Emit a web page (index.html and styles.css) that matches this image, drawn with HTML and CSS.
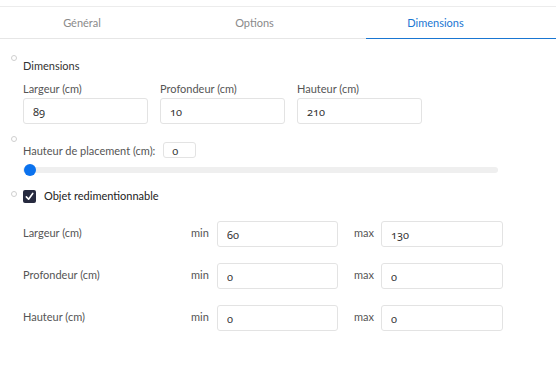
FILE: index.html
```html
<!DOCTYPE html>
<html lang="fr">
<head>
    <meta charset="UTF-8">
    <meta name="viewport" content="width=device-width, initial-scale=1.0">
    <title>Dimensions</title>
    <link rel="stylesheet" href="styles.css">
</head>
<body>

    <div class="top-strip"></div>

    <!-- Tabs -->
    <div class="tabs">
        <div class="tab">Général</div>
        <div class="tab">Options</div>
        <div class="tab active">Dimensions</div>
    </div>

    <div class="panel">

        <!-- Dimensions -->
        <div class="section">
            <span class="marker"></span>
            <div class="section-body">
                <div class="section-title">Dimensions</div>
                <div class="dims">
                    <div class="field">
                        <label>Largeur (cm)</label>
                        <input class="text-input" type="text" value="89">
                    </div>
                    <div class="field">
                        <label>Profondeur (cm)</label>
                        <input class="text-input" type="text" value="10">
                    </div>
                    <div class="field">
                        <label>Hauteur (cm)</label>
                        <input class="text-input" type="text" value="210">
                    </div>
                </div>
            </div>
        </div>

        <!-- Placement -->
        <div class="section section-placement">
            <span class="marker"></span>
            <div class="section-body">
                <div class="inline-row">
                    <label>Hauteur de placement (cm):</label>
                    <input class="small-input" type="text" value="0">
                </div>
                <div class="slider">
                    <div class="slider-thumb"></div>
                </div>
            </div>
        </div>

        <!-- Resizable -->
        <div class="section section-resize">
            <span class="marker"></span>
            <div class="section-body">
                <label class="check-row">
                    <span class="checkbox">
                        <svg width="9" height="9" viewBox="0 0 10 10"><path d="M1.5 5.4 L4 8 L8.6 1.6" fill="none" stroke="#fff" stroke-width="1.8" stroke-linecap="round" stroke-linejoin="round"/></svg>
                    </span>
                    Objet redimentionnable
                </label>
            </div>
        </div>

        <div class="limits">
            <div class="limit-row">
                <span class="limit-label">Largeur (cm)</span>
                <span class="bound">min</span>
                <input class="text-input" type="text" value="60">
                <span class="bound bound-max">max</span>
                <input class="text-input" type="text" value="130">
            </div>
            <div class="limit-row">
                <span class="limit-label">Profondeur (cm)</span>
                <span class="bound">min</span>
                <input class="text-input" type="text" value="0">
                <span class="bound bound-max">max</span>
                <input class="text-input" type="text" value="0">
            </div>
            <div class="limit-row">
                <span class="limit-label">Hauteur (cm)</span>
                <span class="bound">min</span>
                <input class="text-input" type="text" value="0">
                <span class="bound bound-max">max</span>
                <input class="text-input" type="text" value="0">
            </div>
        </div>

    </div>
</body>
</html>
```

FILE: styles.css
```css
body {
    margin: 0;
    padding: 0;
    background-color: #fff;
    font-family: Lato, "Open Sans", sans-serif;
    font-size: 11px;
    color: #555;
}

.top-strip {
    height: 6px;
    border-bottom: 1px solid #ececec;
}

.tabs {
    display: grid;
    grid-template-columns: 164px 181px 1fr;
    height: 31px;
    border-bottom: 1px solid #e6e6e6;
}

.tab {
    display: flex;
    justify-content: center;
    align-items: center;
    color: #8a8a8a;
    position: relative;
    padding-bottom: 1px;
}

.tab.active {
    color: #1976d2;
    padding-right: 30px;
}

.tab.active::after {
    content: "";
    position: absolute;
    left: 21px;
    right: 0;
    bottom: -1px;
    height: 1px;
    background-color: #1976d2;
}

.panel {
    padding-top: 16px;
}

.section {
    display: flex;
    align-items: flex-start;
}

.marker {
    width: 4px;
    height: 4px;
    border: 1px solid #cfcfcf;
    border-radius: 50%;
    margin-left: 11px;
    margin-right: 6px;
    flex-shrink: 0;
}

.section-body {
    flex: 1;
}

.section-title {
    margin-top: 3px;
    line-height: 16px;
    color: #333;
}

.dims {
    display: flex;
    gap: 12px;
    margin-top: 7px;
}

.field label {
    display: block;
    line-height: 16px;
    margin-bottom: 1px;
}

.text-input {
    box-sizing: border-box;
    width: 125px;
    height: 26px;
    border: 1px solid #e3e3e3;
    border-radius: 3px;
    padding: 0 9px;
    font-family: "Noto Sans", sans-serif;
    font-size: 11px;
    font-variant-numeric: oldstyle-nums;
    color: #333;
    outline: none;
}

.section-placement {
    margin-top: 12px;
}

.inline-row {
    display: flex;
    align-items: center;
    gap: 8px;
    margin-top: 6px;
}

.small-input {
    box-sizing: border-box;
    width: 33px;
    height: 16px;
    border: 1px solid #e3e3e3;
    border-radius: 3px;
    padding: 0 8px;
    font-family: "Noto Sans", sans-serif;
    font-size: 11px;
    font-variant-numeric: oldstyle-nums;
    color: #333;
    outline: none;
}

.slider {
    position: relative;
    width: 475px;
    height: 6px;
    margin-top: 9px;
    border-radius: 3px;
    background-color: #efefef;
}

.slider-thumb {
    position: absolute;
    left: 1px;
    top: -3px;
    width: 12px;
    height: 12px;
    border-radius: 50%;
    background-color: #0b72ee;
}

.section-resize {
    margin-top: 16px;
}

.section-resize .marker {
    margin-top: 2px;
}

.check-row {
    display: flex;
    align-items: center;
    gap: 8px;
    color: #222;
    line-height: 14px;
}

.checkbox {
    width: 13px;
    height: 13px;
    border-radius: 2px;
    background-color: #262a3f;
    display: flex;
    align-items: center;
    justify-content: center;
}

.limits {
    padding-left: 23px;
    margin-top: 18px;
}

.limit-row {
    display: grid;
    grid-template-columns: 168px 26px 121px 43px 122px;
    align-items: center;
    margin-bottom: 16px;
}

.limit-row .text-input {
    width: 100%;
}

.limit-label {
    margin-top: -4px;
}

.bound {
    margin-top: -4px;
}

.bound-max {
    padding-left: 16px;
}
```
